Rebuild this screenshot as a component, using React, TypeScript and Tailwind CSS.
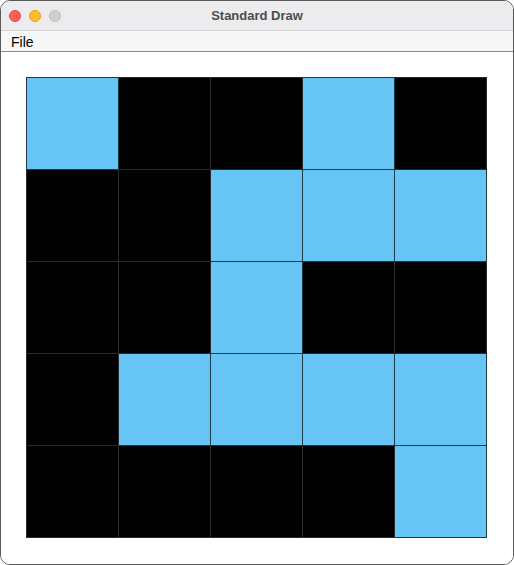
import React from "react";

const pattern = [
  [1, 0, 0, 1, 0],
  [0, 0, 1, 1, 1],
  [0, 0, 1, 0, 0],
  [0, 1, 1, 1, 1],
  [0, 0, 0, 0, 1],
];

function Cell({ on, r, c }: { on: number; r: number; c: number }) {
  const base = on ? "bg-[#66c5f4] border-[#1d3a4a]" : "bg-black border-[#2a2a2a]";
  const w = c === 0 ? "w-[93px] border-l" : "w-[92px]";
  const h = r === 0 ? "h-[93px] border-t" : "h-[92px]";
  return <div className={`${base} ${w} ${h} border-r border-b box-border`} />;
}

export default function App() {
  return (
    <div className="w-[514px] h-[565px] bg-white">
      <div
        className="w-[514px] h-[565px] rounded-[10px] border border-[#5a5a5a] overflow-hidden flex flex-col bg-white box-border"
        style={{ fontFamily: '"Liberation Sans", Arial, sans-serif' }}
      >
        <div className="h-[29px] bg-[#ececee] relative flex items-center justify-center border-b border-[#d4d4d6] box-content">
          <div className="absolute left-[8px] top-[9px] flex gap-[8px]">
            <div className="w-[12px] h-[12px] rounded-full bg-[#fe5f57] border border-[#e2463f]" />
            <div className="w-[12px] h-[12px] rounded-full bg-[#febc2e] border border-[#e1a116]" />
            <div className="w-[12px] h-[12px] rounded-full bg-[#d0d0d0] border border-[#bcbcbc]" />
          </div>
          <span className="text-[13px] font-bold text-[#4c4c4c] mt-[1px]">Standard Draw</span>
        </div>
        <div className="h-[20px] bg-[#f7f7f7] border-b border-[#8c8c8c] box-content flex items-center pl-[10px]">
          <span className="text-[14px] text-black leading-none mt-[2px]">File</span>
        </div>
        <div className="flex-1 bg-white pl-[25px] pt-[25px]">
          <div className="flex flex-col">
            {pattern.map((row, r) => (
              <div key={r} className="flex">
                {row.map((on, c) => (
                  <Cell key={c} on={on} r={r} c={c} />
                ))}
              </div>
            ))}
          </div>
        </div>
      </div>
    </div>
  );
}
